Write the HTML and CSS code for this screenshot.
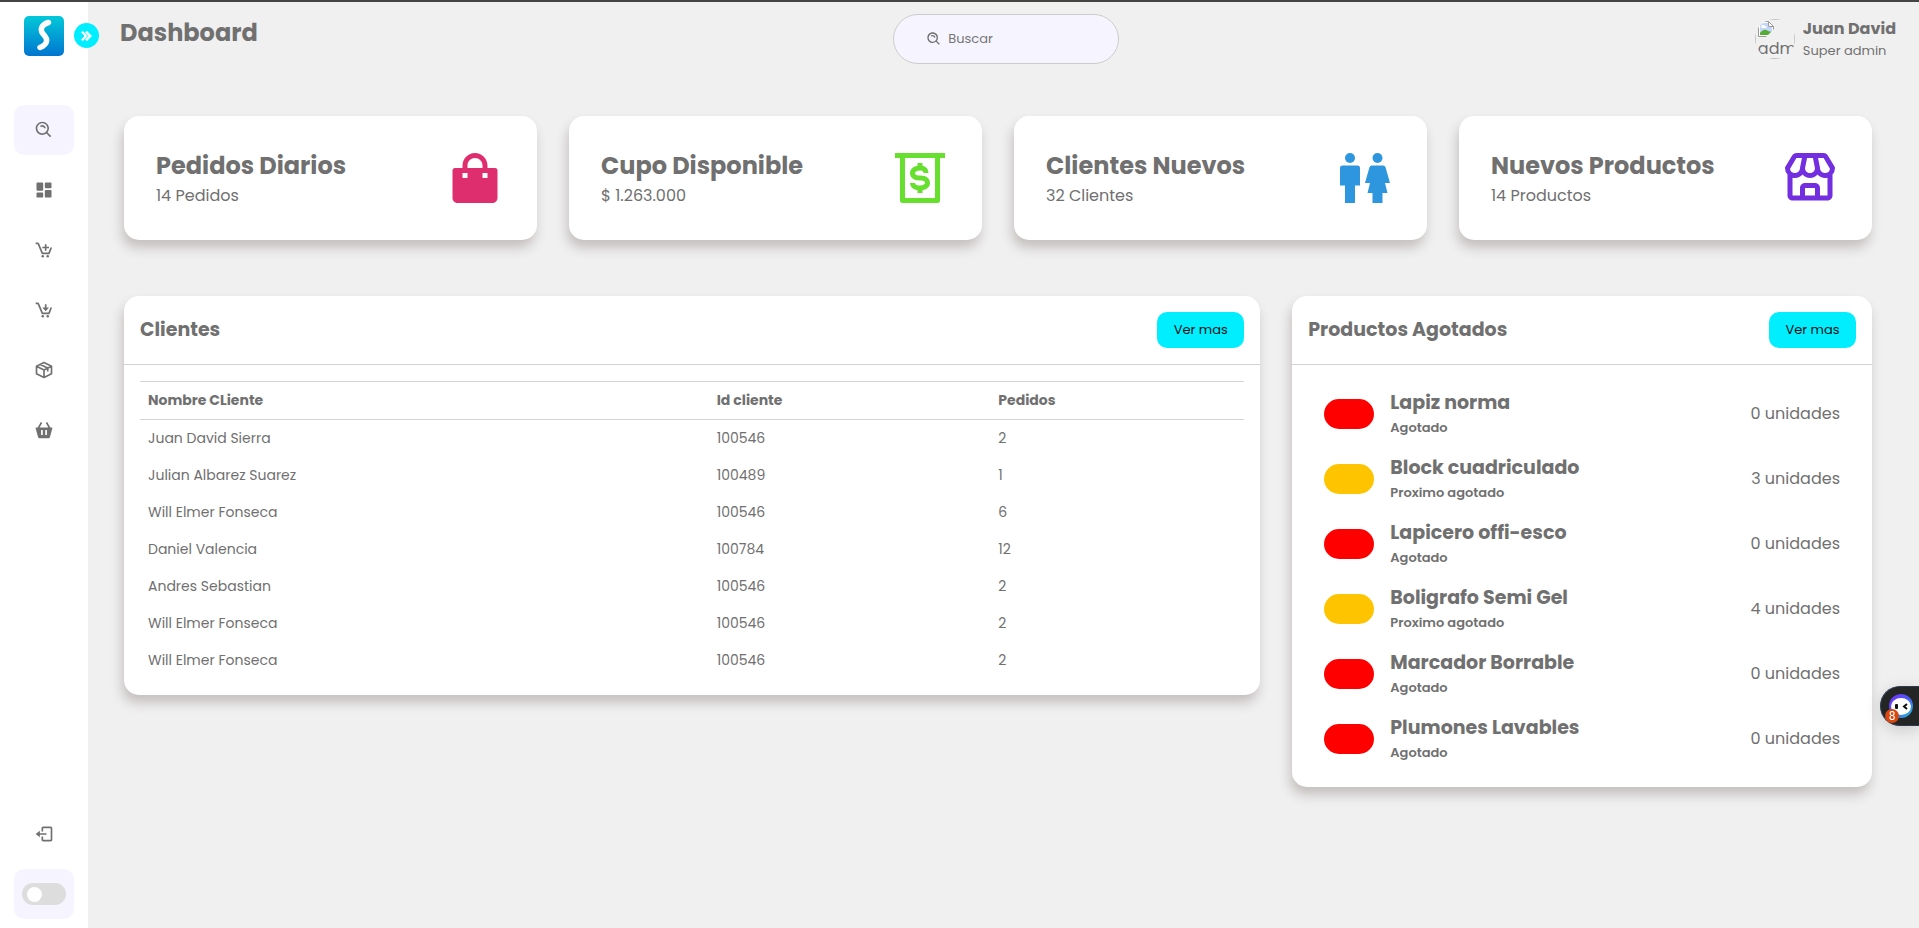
FILE: index.html
```html
<!DOCTYPE html>
<html lang="es">
<head>
<meta charset="utf-8">
<meta name="viewport" content="width=device-width, initial-scale=1">
<title>Dashboard</title>
<link rel="stylesheet" href="styles.css">
</head>
<body>
<aside class="sidebar">
  <svg class="logo" viewBox="0 0 40 40" aria-hidden="true">
    <defs><linearGradient id="logo-bg" x1="0" y1="0" x2="0" y2="1"><stop offset="0" stop-color="#00c9d9"/><stop offset="1" stop-color="#0075d0"/></linearGradient></defs>
    <rect width="40" height="40" rx="5" fill="url(#logo-bg)"/>
    <path d="M24.500 6.500C18.500 8 16 12.500 18 16.500C20 19.500 23.500 21 22.500 25.500C22 28.500 19.500 30 16 31.500" fill="none" stroke="#fff" stroke-width="5.500" stroke-linecap="round"/>
  </svg>
  <button class="expand" type="button" aria-label="Expandir menú">
    <svg class="icon chevrons" viewBox="0 0 24 24"><path d="M10.296 7.710 14.621 12l-4.325 4.290 1.408 1.420L17.461 12l-5.757-5.710z"/><path d="M6.704 6.290 5.296 7.710 9.621 12l-4.325 4.290 1.408 1.420L12.461 12z"/></svg>
  </button>
  <nav class="nav">
    <a class="nav-item boxed" href="#" aria-label="Buscar"><svg class="icon" viewBox="0 0 24 24"><path d="M10 18a7.952 7.952 0 0 0 4.897-1.688l4.396 4.396 1.414-1.414-4.396-4.396A7.952 7.952 0 0 0 18 10c0-4.411-3.589-8-8-8s-8 3.589-8 8 3.589 8 8 8zm0-14c3.309 0 6 2.691 6 6s-2.691 6-6 6-6-2.691-6-6 2.691-6 6-6z"/><path d="M11.412 8.586c.379.380.588.882.588 1.414h2a3.977 3.977 0 0 0-1.174-2.828c-1.514-1.512-4.139-1.512-5.652 0l1.412 1.416c.760-.758 2.070-.756 2.826-.002z"/></svg></a>
    <a class="nav-item" href="#" aria-label="Dashboard"><svg class="icon" viewBox="0 0 24 24"><path d="M4 13h6a1 1 0 0 0 1-1V4a1 1 0 0 0-1-1H4a1 1 0 0 0-1 1v8a1 1 0 0 0 1 1zm-1 7a1 1 0 0 0 1 1h6a1 1 0 0 0 1-1v-4a1 1 0 0 0-1-1H4a1 1 0 0 0-1 1v4zm10 0a1 1 0 0 0 1 1h6a1 1 0 0 0 1-1v-7a1 1 0 0 0-1-1h-6a1 1 0 0 0-1 1v7zm1-10h6a1 1 0 0 0 1-1V4a1 1 0 0 0-1-1h-6a1 1 0 0 0-1 1v5a1 1 0 0 0 1 1z"/></svg></a>
    <a class="nav-item" href="#" aria-label="Ventas"><svg class="icon" viewBox="0 0 24 24"><circle cx="10.500" cy="19.500" r="1.500"/><circle cx="16.500" cy="19.500" r="1.500"/><path d="M13 13h2v-2.990h2.990v-2H15V5.030h-2v2.980h-2.990v2H13z"/><path d="M10 17h8a1 1 0 0 0 .930-.640L21.760 9h-2.140l-2.310 6h-6.640L6.180 4.230A2 2 0 0 0 4.330 3H2v2h2.330l4.750 11.380A1 1 0 0 0 10 17z"/></svg></a>
    <a class="nav-item" href="#" aria-label="Compras"><svg class="icon" viewBox="0 0 24 24"><circle cx="10.500" cy="19.500" r="1.500"/><circle cx="16.500" cy="19.500" r="1.500"/><path d="m14 13.500 4-4.500h-3V5h-2v4h-3z"/><path d="M10 17h8a1 1 0 0 0 .930-.640L21.760 9h-2.140l-2.310 6h-6.640L6.180 4.230A2 2 0 0 0 4.330 3H2v2h2.330l4.750 11.380A1 1 0 0 0 10 17z"/></svg></a>
    <a class="nav-item" href="#" aria-label="Productos"><svg class="icon line" viewBox="0 0 24 24"><path d="M12 3 3 7.500v9L12 21l9-4.500v-9zM3 7.500l9 4.500 9-4.500M12 12v9M7.500 5.300l9 4.400v4"/></svg></a>
    <a class="nav-item" href="#" aria-label="Pedidos"><svg class="icon" viewBox="0 0 24 24"><path fill-rule="evenodd" d="M21 9h-1.420l-3.712-6.496-1.736.992L17.277 9H6.723l3.145-5.504-1.737-.992L4.420 9H3a1 1 0 0 0-.965 1.263l2.799 10.264A2.005 2.005 0 0 0 6.764 22h10.473c.898 0 1.692-.605 1.930-1.475l2.799-10.263A.998.998 0 0 0 21 9zM10.500 18h-2v-6h2v6zm5 0h-2v-6h2v6z"/></svg></a>
  </nav>
  <div class="nav-bottom">
    <a class="nav-item" href="#" aria-label="Cerrar sesión"><svg class="icon" viewBox="0 0 24 24"><path d="m2 12 5 4v-3h8v-2H7V8z"/><path d="M20 3H11c-1.103 0-2 .897-2 2v4h2V5h9v14h-9v-4H9v4c0 1.103.897 2 2 2h9c1.103 0 2-.897 2-2V5c0-1.103-.897-2-2-2z"/></svg></a>
    <label class="nav-item boxed"><input class="switch" type="checkbox" aria-label="Modo oscuro"></label>
  </div>
</aside>

<main class="main">
  <header class="topbar">
    <h1 class="page-title">Dashboard</h1>
    <label class="search">
      <svg class="icon search-icon" viewBox="0 0 24 24" aria-hidden="true"><path d="M10 18a7.952 7.952 0 0 0 4.897-1.688l4.396 4.396 1.414-1.414-4.396-4.396A7.952 7.952 0 0 0 18 10c0-4.411-3.589-8-8-8s-8 3.589-8 8 3.589 8 8 8zm0-14c3.309 0 6 2.691 6 6s-2.691 6-6 6-6-2.691-6-6 2.691-6 6-6z"/><path d="M11.412 8.586c.379.380.588.882.588 1.414h2a3.977 3.977 0 0 0-1.174-2.828c-1.514-1.512-4.139-1.512-5.652 0l1.412 1.416c.760-.758 2.070-.756 2.826-.002z"/></svg>
      <input class="search-input" type="search" placeholder="Buscar" aria-label="Buscar">
    </label>
    <div class="profile">
      <div class="avatar">
        <div class="avatar-frame">
          <svg class="avatar-icon" viewBox="0 0 16 16" aria-hidden="true"><path d="M.5.500h10l5 5v10H.5z" fill="#fff" stroke="#9a9a9a"/><path d="M2 2h8v4h4v8H2z" fill="#c3d5fb"/><path d="M3 6c0-2 3-3 4-1 2 0 2 2 1 2H4z" fill="#fff"/><path d="M2 14v-2c3-4 6-4 8-2l4 1v3z" fill="#55ac35"/><path d="M10.500.500v5h5z" fill="#fff" stroke="#9a9a9a"/><path d="m8 16 8-8v8z" fill="#f0f0f0"/></svg>
          <span class="avatar-alt">adm</span>
        </div>
      </div>
      <div>
        <div class="profile-name">Juan David</div>
        <div class="profile-role">Super admin</div>
      </div>
    </div>
  </header>

  <section class="stats">
    <article class="card stat">
      <div><h2 class="stat-title">Pedidos Diarios</h2><p class="stat-text">14 Pedidos</p></div>
      <svg class="stat-icon pink" viewBox="0 0 24 24" aria-hidden="true"><path d="M5 22h14c1.103 0 2-.897 2-2V9a1 1 0 0 0-1-1h-3V7c0-2.757-2.243-5-5-5S7 4.243 7 7v1H4a1 1 0 0 0-1 1v11c0 1.103.897 2 2 2zM9 7c0-1.654 1.346-3 3-3s3 1.346 3 3v1H9V7zm-2 3h2v2H7v-2zm8 0h2v2h-2v-2z"/></svg>
    </article>
    <article class="card stat">
      <div><h2 class="stat-title">Cupo Disponible</h2><p class="stat-text">$ 1.263.000</p></div>
      <svg class="stat-icon green" viewBox="0 0 24 24" aria-hidden="true"><path d="M12 15c-1.840 0-2-.860-2-1H8c0 .920.660 2.550 3 2.920V18h2v-1.080c2-.340 3-1.630 3-2.920 0-1.120-.520-3-4-3-2 0-2-.630-2-1s.7-1 2-1 1.390.640 1.400 1h2A3 3 0 0 0 13 7.120V6h-2v1.090C9 7.420 8 8.710 8 10c0 1.120.520 3 4 3 2 0 2 .680 2 1s-.620 1-2 1z"/><path d="M5 2H2v2h2v17a1 1 0 0 0 1 1h14a1 1 0 0 0 1-1V4h2V2H5zm13 18H6V4h12v16z"/></svg>
    </article>
    <article class="card stat">
      <div><h2 class="stat-title">Clientes Nuevos</h2><p class="stat-text">32 Clientes</p></div>
      <svg class="stat-icon blue" viewBox="0 0 24 24" aria-hidden="true"><circle cx="6" cy="4" r="2"/><path d="M9 7H3a1 1 0 0 0-1 1v7h2v7h4v-7h2V8a1 1 0 0 0-1-1z"/><circle cx="17" cy="4" r="2"/><path d="M20.210 7.730a1 1 0 0 0-1-.730h-4.420a1 1 0 0 0-1 .730L12 14h2l-1 4h2v4h4v-4h2l-1-4h2z"/></svg>
    </article>
    <article class="card stat">
      <div><h2 class="stat-title">Nuevos Productos</h2><p class="stat-text">14 Productos</p></div>
      <svg class="stat-icon purple" viewBox="0 0 24 24" aria-hidden="true"><path d="M19.148 2.971A2.008 2.008 0 0 0 17.434 2H6.566c-.698 0-1.355.372-1.714.971L2.143 7.485A.995.995 0 0 0 2 8a3.970 3.970 0 0 0 1 2.618V19c0 1.103.897 2 2 2h14c1.103 0 2-.897 2-2v-8.382A3.970 3.970 0 0 0 22 8a.995.995 0 0 0-.143-.515l-2.709-4.514zm.836 5.280A2.003 2.003 0 0 1 18 10c-1.103 0-2-.897-2-2 0-.068-.025-.128-.039-.192l.020-.004L15.220 4h2.214l2.550 4.251zM10.819 4h2.361l.813 4.065C13.958 9.137 13.080 10 12 10s-1.958-.863-1.993-1.935L10.819 4zM6.566 4H8.780l-.760 3.804.020.004C8.025 7.872 8 7.932 8 8c0 1.103-.897 2-2 2a2.003 2.003 0 0 1-1.984-1.749L6.566 4zM10 19v-3h4v3h-4zm6 0v-3c0-1.103-.897-2-2-2h-4c-1.103 0-2 .897-2 2v3H5v-7.142c.321.083.652.142 1 .142a3.990 3.990 0 0 0 3-1.357c.733.832 1.807 1.357 3 1.357s2.267-.525 3-1.357A3.990 3.990 0 0 0 18 12c.348 0 .679-.059 1-.142V19h-3z"/></svg>
    </article>
  </section>

  <section class="panels">
    <article class="card">
      <header class="panel-head"><h2 class="panel-title">Clientes</h2><button class="more" type="button">Ver mas</button></header>
      <div class="panel-body">
        <table class="clients">
          <thead><tr><th class="col-name">Nombre CLiente</th><th class="col-id">Id cliente</th><th>Pedidos</th></tr></thead>
          <tbody>
            <tr><td>Juan David Sierra</td><td>100546</td><td>2</td></tr>
            <tr><td>Julian Albarez Suarez</td><td>100489</td><td>1</td></tr>
            <tr><td>Will Elmer Fonseca</td><td>100546</td><td>6</td></tr>
            <tr><td>Daniel Valencia</td><td>100784</td><td>12</td></tr>
            <tr><td>Andres Sebastian</td><td>100546</td><td>2</td></tr>
            <tr><td>Will Elmer Fonseca</td><td>100546</td><td>2</td></tr>
            <tr><td>Will Elmer Fonseca</td><td>100546</td><td>2</td></tr>
          </tbody>
        </table>
      </div>
    </article>
    <article class="card">
      <header class="panel-head"><h2 class="panel-title">Productos Agotados</h2><button class="more" type="button">Ver mas</button></header>
      <ul class="panel-body products">
        <li class="product"><span class="pill out"></span><div class="product-info"><h3 class="product-name">Lapiz norma</h3><p class="product-state">Agotado</p></div><span class="units">0 unidades</span></li>
        <li class="product"><span class="pill low"></span><div class="product-info"><h3 class="product-name">Block cuadriculado</h3><p class="product-state">Proximo agotado</p></div><span class="units">3 unidades</span></li>
        <li class="product"><span class="pill out"></span><div class="product-info"><h3 class="product-name">Lapicero offi-esco</h3><p class="product-state">Agotado</p></div><span class="units">0 unidades</span></li>
        <li class="product"><span class="pill low"></span><div class="product-info"><h3 class="product-name">Boligrafo Semi Gel</h3><p class="product-state">Proximo agotado</p></div><span class="units">4 unidades</span></li>
        <li class="product"><span class="pill out"></span><div class="product-info"><h3 class="product-name">Marcador Borrable</h3><p class="product-state">Agotado</p></div><span class="units">0 unidades</span></li>
        <li class="product"><span class="pill out"></span><div class="product-info"><h3 class="product-name">Plumones Lavables</h3><p class="product-state">Agotado</p></div><span class="units">0 unidades</span></li>
      </ul>
    </article>
  </section>
</main>

<button class="assistant" type="button" aria-label="Asistente">
  <svg class="assistant-face" viewBox="0 0 24 24" aria-hidden="true">
    <defs><linearGradient id="ring" x1="0" y1="0" x2="1" y2="1"><stop offset="0" stop-color="#7a2cf5"/><stop offset=".5" stop-color="#4a5cf5"/><stop offset="1" stop-color="#22c3d6"/></linearGradient></defs>
    <circle cx="12" cy="12" r="12" fill="url(#ring)"/><ellipse cx="12" cy="12.500" rx="10" ry="8.500" fill="#fff"/>
    <rect x="6" y="10" width="3" height="5" rx="1" fill="#111"/><path d="m18 10-3 2.500 3 2.500" fill="none" stroke="#111" stroke-width="2"/>
  </svg>
  <span class="badge">8</span>
</button>
</body>
</html>
```
FILE: styles.css
```css
* { box-sizing: border-box; margin: 0; padding: 0; }

body {
  display: flex;
  min-height: 100vh;
  border-top: 2px solid #444;
  background: #f0f0f0;
  color: #707070;
  font-family: Poppins, Inter, "Noto Sans", sans-serif;
  font-size: 16px;
  line-height: 24px;
}

button, input { font: inherit; }
.icon { width: 20px; height: 20px; fill: currentColor; }
.line { fill: none; stroke: currentColor; stroke-width: 2; stroke-linejoin: round; }
.chevrons { stroke: currentColor; stroke-width: 1; }

.sidebar {
  position: relative;
  display: flex;
  flex-direction: column;
  align-items: center;
  flex: none;
  width: 88px;
  padding: 14px 14px 9px;
  background: #fff;
}
.logo { width: 40px; height: 40px; }
.expand {
  position: absolute;
  top: 21px;
  right: -11px;
  display: flex;
  align-items: center;
  justify-content: center;
  width: 25px;
  height: 25px;
  border: 0;
  border-radius: 50%;
  background: #00eeff;
  color: #fff;
}
.nav, .nav-bottom { display: flex; flex-direction: column; gap: 10px; }
.nav { margin-top: 49px; }
.nav-bottom { margin-top: auto; }
.nav-item {
  display: flex;
  align-items: center;
  justify-content: center;
  width: 60px;
  height: 50px;
  border-radius: 10px;
  color: #707070;
}
.boxed { background: #f6f5ff; }
.switch {
  appearance: none;
  display: flex;
  align-items: center;
  width: 44px;
  height: 22px;
  padding-left: 5px;
  border-radius: 11px;
  background: #ddd;
}
.switch::before { content: ""; width: 15px; height: 15px; border-radius: 50%; background: #fff; }
.switch:checked::before { margin-left: 19px; }

.main { flex: 1; min-width: 0; }
.topbar {
  display: flex;
  align-items: flex-start;
  justify-content: space-between;
  padding: 12px 23px 0 32px;
}
.page-title { font-size: 24px; font-weight: 700; line-height: 38px; }
.search {
  display: flex;
  align-items: center;
  gap: 6px;
  width: 226px;
  height: 50px;
  padding: 0 32px;
  border: 1px solid #ccc;
  border-radius: 25px;
  background: #f6f5ff;
}
.search-icon { flex: none; width: 16px; height: 16px; }
.search-input {
  width: 100%;
  min-width: 0;
  border: 0;
  outline: 0;
  background: none;
  font-size: 13px;
  line-height: 20px;
}
.search-input::placeholder { color: #757575; opacity: 1; }
.profile { display: flex; align-items: center; gap: 8px; padding-top: 3px; }
.avatar { width: 40px; height: 40px; border-radius: 50%; overflow: hidden; }
.avatar-frame { height: 40px; padding: 1px 2px; border: 1px solid #c4c4c4; }
.avatar-icon { display: block; width: 16px; height: 16px; }
.avatar-alt { display: block; line-height: 24px; }
.profile-name { font-weight: 700; }
.profile-role { font-size: 13px; line-height: 20px; }

.card { border-radius: 15px; background: #fff; box-shadow: -2px 8px 12px #c6c0c0; }

.stats, .panels { display: grid; gap: 32px; padding: 0 47px 0 36px; }
.stats { grid-template-columns: repeat(4, 1fr); margin-top: 52px; }
.stat { display: flex; align-items: center; justify-content: space-between; padding: 32px; }
.stat-title { font-size: 24px; font-weight: 700; line-height: 36px; }
.stat-icon { flex: none; width: 60px; height: 60px; }
.pink { fill: #df2e6d; }
.green { fill: #66df2e; }
.blue { fill: #2e96df; }
.purple { fill: #722edf; }

.panels { grid-template-columns: 49fr 25fr; align-items: start; margin-top: 56px; }
.panel-head {
  display: flex;
  align-items: center;
  justify-content: space-between;
  padding: 16px;
  border-bottom: 1px solid #d6d1d1;
}
.panel-title { font-size: 19px; font-weight: 700; line-height: 28px; }
.more {
  width: 87px;
  height: 36px;
  border: 0;
  border-radius: 10px;
  background: #00eeff;
  color: #111;
  font-size: 13px;
}
.panel-body { padding: 16px; }

.clients { width: 100%; border-collapse: collapse; font-size: 14px; line-height: 21px; text-align: left; }
.clients th, .clients td { padding: 8px; }
.clients th { border-top: 1px solid #d4d4d4; border-bottom: 1px solid #d4d4d4; font-weight: 700; }
.col-name { width: 51.5%; }
.col-id { width: 25.5%; }

.products { list-style: none; }
.product { display: flex; align-items: center; gap: 16px; padding: 8px 16px; }
.pill { flex: none; width: 50px; height: 30px; border-radius: 15px; }
.out { background: #f00; }
.low { background: #ffc400; }
.product-info { flex: 1; }
.product-name { font-size: 19px; font-weight: 700; line-height: 28px; }
.product-state { font-size: 13px; font-weight: 600; line-height: 21px; }

.assistant {
  position: fixed;
  top: 686px;
  right: 0;
  width: 39px;
  height: 40px;
  border: 1px solid #2f3a52;
  border-right: 0;
  border-radius: 20px 0 0 20px;
  background: #242626;
  box-shadow: 0 4px 16px rgba(0, 0, 0, .16);
}
.assistant-face { position: absolute; top: 7px; left: 8px; width: 24px; height: 24px; }
.badge {
  position: absolute;
  top: 22px;
  left: 4px;
  width: 14px;
  height: 14px;
  border-radius: 50%;
  background: #d9480f;
  color: #fff;
  font-family: Roboto, sans-serif;
  font-size: 12px;
  line-height: 14px;
  text-align: center;
}
```
